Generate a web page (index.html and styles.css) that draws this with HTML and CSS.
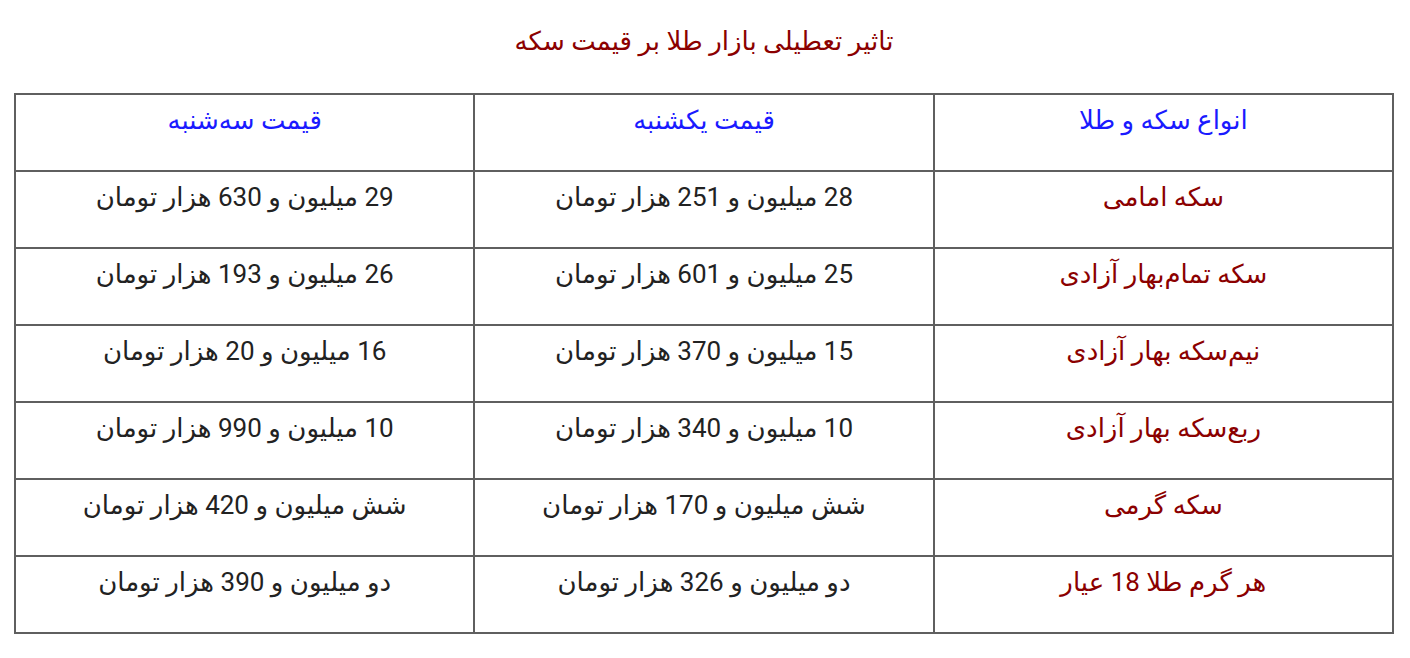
FILE: index.html
```html
<!DOCTYPE html>
<html lang="fa" dir="rtl">
<head>
<meta charset="utf-8">
<link rel="stylesheet" href="styles.css">
</head>
<body>
<div class="page">
  <h2 class="title">تاثیر تعطیلی بازار طلا بر قیمت سکه</h2>
  <table class="prices">
    <tr class="head">
      <td>انواع سکه و طلا</td>
      <td>قیمت یکشنبه</td>
      <td>قیمت سه‌شنبه</td>
    </tr>
    <tr>
      <td class="name">سکه امامی</td>
      <td>28 میلیون و 251 هزار تومان</td>
      <td>29 میلیون و 630 هزار تومان</td>
    </tr>
    <tr>
      <td class="name">سکه تمام‌بهار آزادی</td>
      <td>25 میلیون و 601 هزار تومان</td>
      <td>26 میلیون و 193 هزار تومان</td>
    </tr>
    <tr>
      <td class="name">نیم‌سکه بهار آزادی</td>
      <td>15 میلیون و 370 هزار تومان</td>
      <td>16 میلیون و 20 هزار تومان</td>
    </tr>
    <tr>
      <td class="name">ربع‌سکه بهار آزادی</td>
      <td>10 میلیون و 340 هزار تومان</td>
      <td>10 میلیون و 990 هزار تومان</td>
    </tr>
    <tr>
      <td class="name">سکه گرمی</td>
      <td>شش میلیون و 170 هزار تومان</td>
      <td>شش میلیون و 420 هزار تومان</td>
    </tr>
    <tr>
      <td class="name">هر گرم طلا 18 عیار</td>
      <td>دو میلیون و 326 هزار تومان</td>
      <td>دو میلیون و 390 هزار تومان</td>
    </tr>
  </table>
</div>
</body>
</html>
```
FILE: styles.css
```css
html, body {
  margin: 0;
  padding: 0;
  background: #fff;
}
.page {
  padding: 24px 16px 0 14px;
  font-family: Roboto, "DejaVu Sans", sans-serif;
}
.title {
  margin: 0 0 35px 0;
  text-align: center;
  color: #8b0000;
  font-size: 26px;
  font-weight: 500;
  line-height: 34px;
}
.prices {
  width: 100%;
  border-collapse: collapse;
  table-layout: fixed;
}
.prices td {
  border: 2px solid #5f5f5f;
  height: 70px;
  padding: 5px 8px 0 8px;
  vertical-align: top;
  text-align: center;
  font-size: 26px;
  line-height: 40px;
  color: #222;
  font-weight: 400;
}
.prices .head td {
  color: #1a1aff;
  font-weight: 500;
}
.prices td.name {
  color: #8b0000;
  font-weight: 400;
}
```
